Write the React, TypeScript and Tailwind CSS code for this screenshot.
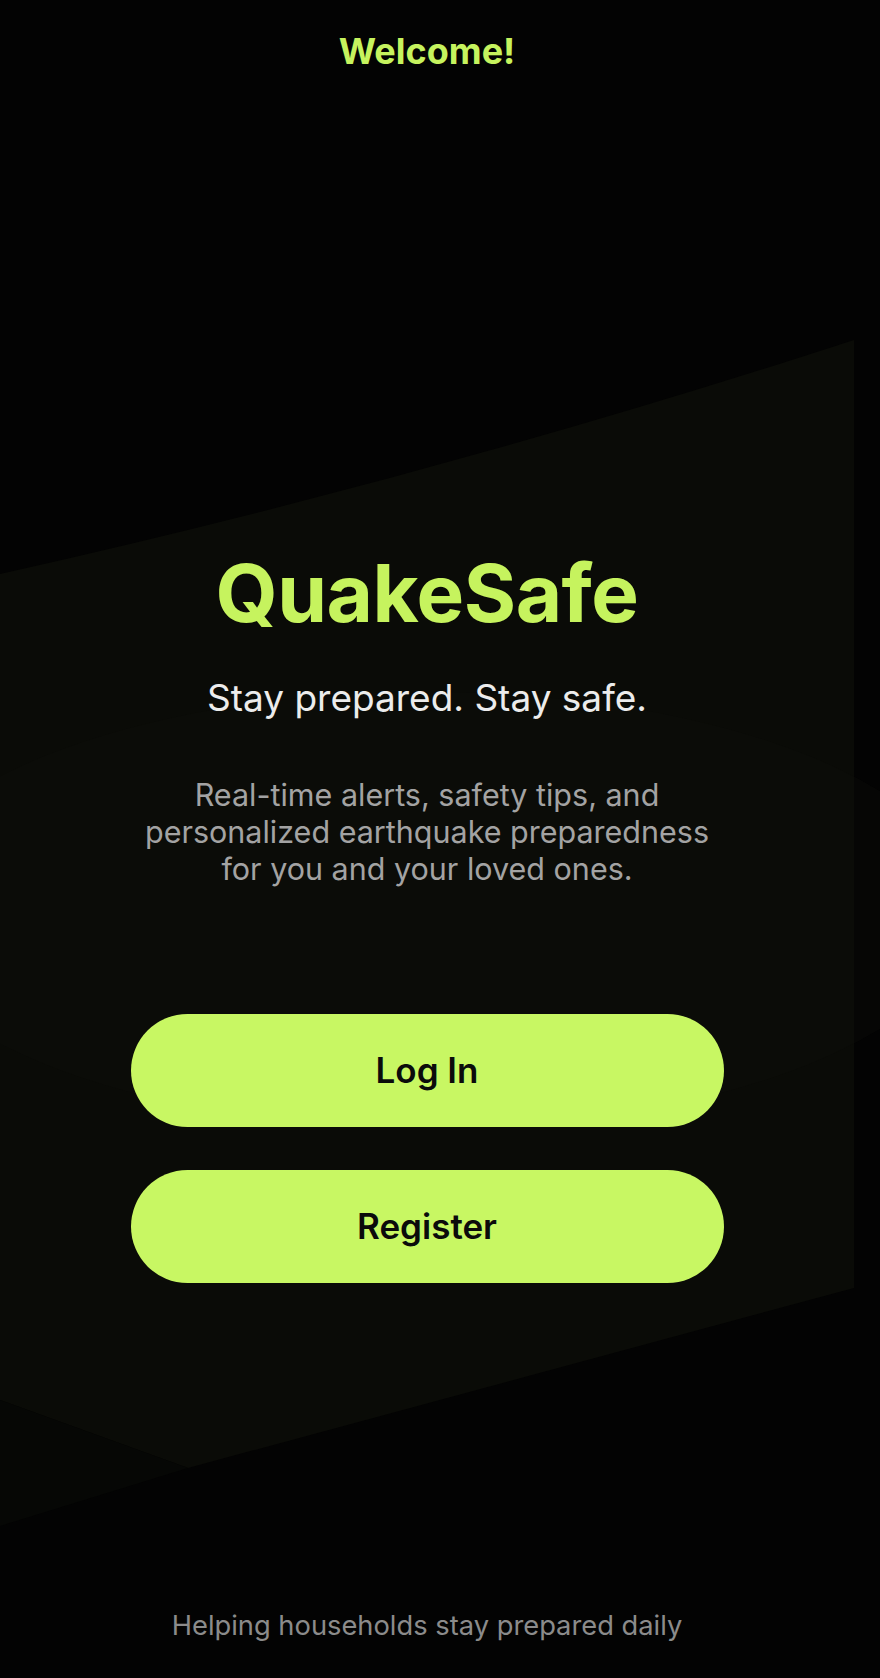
const Backdrop = () => (
  <svg
    className="absolute inset-0 h-full w-full"
    viewBox="0 0 880 1678"
    preserveAspectRatio="none"
    aria-hidden="true"
  >
    <rect width="880" height="1678" fill="#030303" />
    {/* tilted lighter band behind the content */}
    <path d="M0 574 Q 430 478 854 340 L 854 1288 L 188 1468 L 0 1400 Z" fill="#0a0b07" />
    <path d="M0 1400 L 188 1468 L 0 1526 Z" fill="#060705" />
    <ellipse cx="427" cy="910" rx="540" ry="218" fill="#0e0f0b" opacity="0.35" />
  </svg>
)

const PillButton = ({ label }: { label: string }) => (
  <button className="h-[113px] w-[593px] rounded-full bg-[#c8f763] text-[35px] font-semibold leading-none text-[#0b0b0b]">
    {label}
  </button>
)

export default function App() {
  return (
    <div className="relative flex min-h-screen w-full overflow-hidden bg-[#030303] font-['Inter','Liberation_Sans',sans-serif]">
      <Backdrop />

      <main className="relative flex min-h-screen w-[854px] flex-col items-center">
        <h2 className="pt-[30px] text-[36px] font-bold leading-[42px] text-[#c6f35e]">Welcome!</h2>

        <section className="mt-[473px] flex flex-col items-center text-center">
          <h1 className="text-[80px] font-bold leading-[96px] tracking-[-0.5px] text-[#c6f35e]">QuakeSafe</h1>
          <p className="mt-[35px] text-[37px] leading-[44px] text-[#ececec]">Stay prepared. Stay safe.</p>
          <p className="mt-[56px] text-[30.5px] leading-[37px] text-[#a3a3a3]">
            Real-time alerts, safety tips, and
            <br />
            personalized earthquake preparedness
            <br />
            for you and your loved ones.
          </p>
        </section>

        <div className="mt-[127px] flex flex-col gap-[43px]">
          <PillButton label="Log In" />
          <PillButton label="Register" />
        </div>

        <p className="mt-auto pb-[36px] text-[27.3px] leading-[32px] text-[#8b8b8b]">
          Helping households stay prepared daily
        </p>
      </main>

      <div className="relative flex-1" />
    </div>
  )
}
